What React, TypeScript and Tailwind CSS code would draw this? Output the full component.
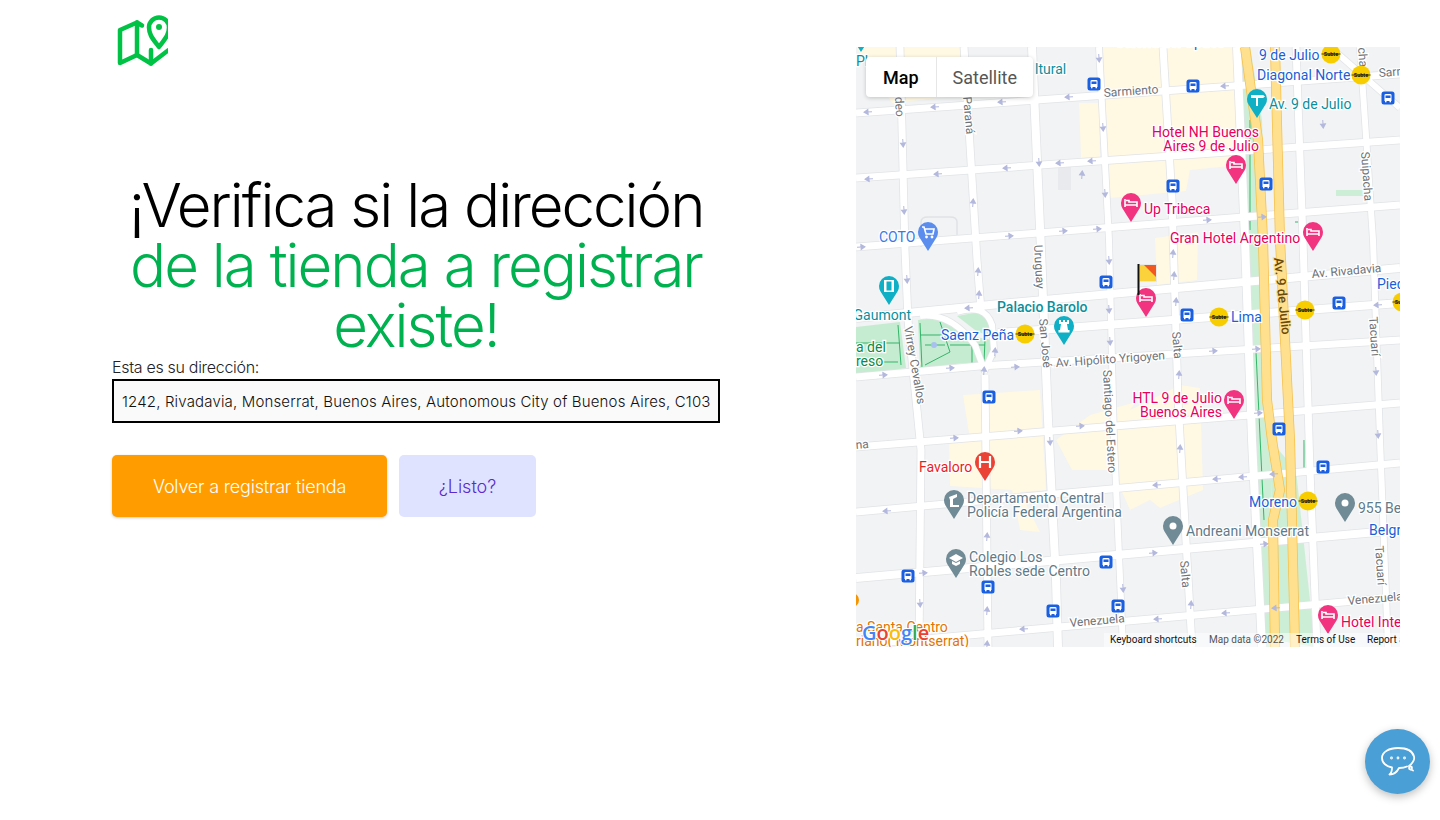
const ROADS: { d: string; w: number }[] = [
  { d: "M856 113L1400 74", w: 7 },
  { d: "M856 178L1400 140", w: 7 },
  { d: "M856 247L1400 205", w: 7 },
  { d: "M856 318L1000 304L1400 268", w: 8 },
  { d: "M998 333L1400 303", w: 8 },
  { d: "M856 377L980 366L1400 340", w: 7 },
  { d: "M856 447L1400 403", w: 7 },
  { d: "M856 512L1400 463", w: 7 },
  { d: "M856 578L1400 530", w: 8 },
  { d: "M856 645L1400 597", w: 7 },
  { d: "M900 47L905 250L908 320L921 450L919 647", w: 7 },
  { d: "M964 47L977 260L981 310", w: 7 },
  { d: "M985 375L988 647", w: 7 },
  { d: "M1032 47L1041 250L1048 420L1056 580L1058 647", w: 8 },
  { d: "M1099 47L1109 240L1114 440L1123 647", w: 6 },
  { d: "M1163 47L1172 200L1178 400L1192 647", w: 7 },
  { d: "M1237 47L1245 240L1252 440L1262 647", w: 8 },
  { d: "M1296 47L1303 240L1310 470L1317 647", w: 7 },
  { d: "M1360 47L1373 240L1380 440L1388 647", w: 6 },
  { d: "M1330 47L1400 108", w: 6 },
  { d: "M957 312Q985 303 992 325L994 350L984 372", w: 6 },
  { d: "M920 316Q950 312 975 345L985 372", w: 6 },
];

const BEIGE = [
  "856,47 968,47 966,95 892,103",
  "1103,47 1240,47 1240,165 1190,170 1186,191 1110,198 1108,150",
  "1079,103 1099,103 1100,157 1081,158",
  "1123,162 1136,160 1136,180 1125,181",
  "1155,238 1198,232 1197,280 1157,285",
  "963,395 1040,390 1046,490 1020,492 1040,532 1020,530 1012,490 950,486 949,440 970,440",
  "1090,415 1136,402 1130,410 1180,385 1200,388 1203,490 1160,508 1150,500 1130,510 1112,470 1072,470 1056,440",
];

const ARROWS: [number, number, "l" | "r" | "u" | "d"][] = [
  [868, 112, "l"], [935, 107, "l"], [1002, 102, "l"], [1069, 97, "l"], [903, 143, "d"], [1039, 162, "d"],
  [1103, 127, "d"], [1099, 58, "d"], [869, 179, "l"], [938, 174, "l"], [1007, 168, "l"], [1060, 163, "l"],
  [1092, 161, "l"], [904, 210, "d"], [973, 203, "u"], [1082, 175, "u"], [1105, 193, "d"], [1009, 236, "r"],
  [1063, 231, "r"], [1097, 229, "r"], [861, 247, "r"], [1225, 86, "l"], [1323, 124, "d"], [1207, 220, "r"],
  [1262, 217, "r"], [907, 279, "d"], [978, 272, "u"], [979, 295, "u"], [969, 308, "l"], [1109, 260, "d"],
  [1109, 309, "d"], [1110, 341, "d"], [995, 352, "u"], [984, 371, "u"], [950, 368, "r"], [883, 375, "r"],
  [1015, 367, "r"], [1080, 426, "r"], [1018, 431, "r"], [954, 438, "r"], [1050, 441, "d"], [1173, 254, "u"],
  [1174, 276, "u"], [1176, 302, "u"], [1213, 351, "r"], [1256, 349, "r"], [1179, 375, "u"], [1258, 413, "r"],
  [1378, 305, "l"], [1376, 371, "d"], [1378, 434, "d"], [1180, 449, "u"], [887, 511, "l"], [987, 537, "u"],
  [923, 573, "r"], [920, 603, "d"], [987, 611, "u"], [1123, 588, "d"], [1024, 629, "l"], [987, 645, "u"],
  [1274, 474, "l"], [1243, 477, "l"], [1217, 479, "l"], [1157, 485, "l"], [1264, 544, "r"], [1153, 553, "r"],
  [1191, 605, "u"], [1226, 613, "l"], [1158, 619, "l"], [1276, 608, "l"],
];

const BUSES = [
  [1094, 84], [1193, 86], [1388, 98], [1173, 186], [1266, 184], [1106, 282], [989, 397], [1187, 315],
  [1339, 303], [1279, 429], [908, 576], [988, 587], [1106, 562], [1053, 611], [1118, 606], [1323, 467],
];

const SUBTES = [[1331, 54], [1361, 75], [1025, 334], [1219, 317], [1305, 310], [1402, 302], [1308, 501]];

const PLACES: { t: string; x: number; y: number; c: string; end?: boolean; bold?: boolean }[] = [
  { t: "Galería del Óptico", x: 1115, y: 47, c: "#1a5fd8" },
  { t: "9 de Julio", x: 1259, y: 60, c: "#1a5fd8" },
  { t: "Diagonal Norte", x: 1257, y: 80, c: "#1a5fd8" },
  { t: "Saenz Peña", x: 941, y: 340, c: "#1a5fd8" },
  { t: "Lima", x: 1231, y: 322, c: "#1a5fd8" },
  { t: "Moreno", x: 1249, y: 507, c: "#1a5fd8" },
  { t: "Belgrano", x: 1369, y: 535, c: "#1a5fd8" },
  { t: "Piedras", x: 1377, y: 289, c: "#1a5fd8" },
  { t: "COTO", x: 879, y: 242, c: "#3b78e7" },
  { t: "Hotel NH Buenos", x: 1259, y: 137, c: "#e8005c", end: true },
  { t: "Aires 9 de Julio", x: 1259, y: 151, c: "#e8005c", end: true },
  { t: "Up Tribeca", x: 1144, y: 214, c: "#e8005c" },
  { t: "Gran Hotel Argentino", x: 1170, y: 243, c: "#e8005c" },
  { t: "HTL 9 de Julio", x: 1222, y: 403, c: "#e8005c", end: true },
  { t: "Buenos Aires", x: 1222, y: 417, c: "#e8005c", end: true },
  { t: "Hotel Intercontinental", x: 1341, y: 627, c: "#e8005c" },
  { t: "Av. 9 de Julio", x: 1269, y: 109, c: "#0a8f9c" },
  { t: "ltural", x: 1035, y: 74, c: "#0a8f9c" },
  { t: "Pla", x: 856, y: 66, c: "#0a8f9c" },
  { t: "Gaumont", x: 911, y: 320, c: "#0a8f9c", end: true },
  { t: "Palacio Barolo", x: 997, y: 312, c: "#0a8f9c", bold: true },
  { t: "a del", x: 856, y: 352, c: "#0a8a45" },
  { t: "reso", x: 856, y: 366, c: "#0a8a45" },
  { t: "Favaloro", x: 919, y: 472, c: "#ea1d25" },
  { t: "Departamento Central", x: 967, y: 503, c: "#5f7a88" },
  { t: "Policía Federal Argentina", x: 967, y: 517, c: "#5f7a88" },
  { t: "Colegio Los", x: 969, y: 562, c: "#5f7a88" },
  { t: "Robles sede Centro", x: 969, y: 576, c: "#5f7a88" },
  { t: "Andreani Monserrat", x: 1186, y: 536, c: "#5f7a88" },
  { t: "955 Belgrano", x: 1358, y: 513, c: "#5f7a88" },
  { t: "a Santa Centro", x: 856, y: 632, c: "#e37400" },
  { t: "riano( Montserrat)", x: 856, y: 646, c: "#e37400" },
];

const STREETS: { t: string; x: number; y: number; r: number }[] = [
  { t: "Sarmiento", x: 1104, y: 97, r: -4 },
  { t: "Sarmiento", x: 1379, y: 77, r: -4 },
  { t: "Av. Rivadavia", x: 1312, y: 278, r: -5 },
  { t: "Av. Hipólito Yrigoyen", x: 1056, y: 367, r: -4 },
  { t: "Venezuela", x: 1070, y: 627, r: -5 },
  { t: "Venezuela", x: 1348, y: 605, r: -5 },
  { t: "na", x: 856, y: 449, r: -5 },
  { t: "Paraná", x: 963, y: 97, r: 85 },
  { t: "Uruguay", x: 1034, y: 245, r: 87 },
  { t: "San José", x: 1039, y: 319, r: 85 },
  { t: "Santiago del Estero", x: 1103, y: 370, r: 87 },
  { t: "Salta", x: 1172, y: 332, r: 85 },
  { t: "Salta", x: 1180, y: 561, r: 85 },
  { t: "Tacuarí", x: 1369, y: 317, r: 86 },
  { t: "Tacuarí", x: 1375, y: 546, r: 86 },
  { t: "Suipacha", x: 1361, y: 152, r: 86 },
  { t: "Suipacha", x: 1356, y: 18, r: 86 },
  { t: "Virrey Cevallos", x: 904, y: 327, r: 80 },
  { t: "deo", x: 895, y: 97, r: 87 },
];

const ARROW_ROTATION = { l: 176, r: -4, u: -86, d: 86 };

function Arrow({ x, y, dir }: { x: number; y: number; dir: "l" | "r" | "u" | "d" }) {
  return (
    <path
      d="M-4 0H1M0-2.500L4 0L0 2.500Z"
      transform={`translate(${x} ${y}) rotate(${ARROW_ROTATION[dir]})`}
      fill="#b3b8dc"
      stroke="#b3b8dc"
      strokeWidth="1"
    />
  );
}

function Bus({ x, y }: { x: number; y: number }) {
  return (
    <g transform={`translate(${x - 6.5} ${y - 6.5})`}>
      <rect width="13" height="13" rx="2.5" fill="#1a5fe0" />
      <path d="M3 3.5Q3 2.5 4.5 2.5H8.5Q10 2.5 10 3.5V9.5H3Z" fill="#fff" />
      <rect x="4" y="4" width="5" height="2.5" fill="#1a5fe0" />
      <rect x="3.5" y="9.5" width="1.5" height="1.3" fill="#fff" />
      <rect x="8" y="9.5" width="1.5" height="1.3" fill="#fff" />
    </g>
  );
}

function Subte({ x, y }: { x: number; y: number }) {
  return (
    <g>
      <circle cx={x} cy={y} r="9.5" fill="#f8cd00" />
      <line x1={x - 9.5} y1={y} x2={x + 9.5} y2={y} stroke="#222" strokeWidth="0.8" />
      <text x={x} y={y + 1.8} textAnchor="middle" fontSize="5.5" fontWeight="700" fill="#111">
        Subte
      </text>
    </g>
  );
}

function Pin({ x, tip, color, children }: { x: number; tip: number; color: string; children?: React.ReactNode }) {
  return (
    <g transform={`translate(${x} ${tip - 19})`}>
      <path d="M0 19L-8.5 5.5A10 10 0 0 1-10 0A10 10 0 0 1 10 0A10 10 0 0 1 8.5 5.5Z" fill={color} />
      {children}
    </g>
  );
}

const BedGlyph = (
  <path d="M-6-4V4M-6 2H6V4M6 2V-1H-2V-2.5H-5" fill="none" stroke="#fff" strokeWidth="1.6" />
);
const DotGlyph = <circle r="3.5" fill="#fff" />;

function GoogleMap() {
  return (
    <svg viewBox="856 47 544 600" className="block w-full h-full" style={{ fontFamily: "Roboto, sans-serif" }}>
      <rect x="856" y="47" width="544" height="600" fill="#f1f3f4" />
      {BEIGE.map((p) => (
        <polygon key={p} points={p} fill="#fff8e3" />
      ))}
      <rect x="1058" y="165" width="13" height="25" fill="#e8eaed" />
      <path d="M921 247V222Q921 217 928 217H950Q957 217 957 222V240" fill="none" stroke="#e0e2e5" strokeWidth="1.5" />

      {/* parks */}
      <polygon points="1240,47 1250,47 1262,120 1275,640 1315,647 1296,470 1270,440 1262,300 1248,240" fill="#cdeed6" />
      <polygon points="1250,100 1262,240 1270,440 1275,647 1262,647 1250,440 1245,240" fill="#cdeed6" />
      <polygon points="856,327 900,322 906,368 856,376" fill="#c5ecd0" />
      <polygon points="918,320 945,317 965,335 992,340 996,357 985,366 965,363 920,368" fill="#c5ecd0" />
      <polygon points="957,316 985,311 993,325 992,338 975,330" fill="#c5ecd0" />
      <rect x="1336" y="190" width="28" height="6" fill="#cdeed6" />
      <g fill="none" stroke="#34b56a" strokeWidth="1">
        <path d="M856 343H900M898 325L901 365M856 362H898M920 323L922 368M920 335H945M940 322L950 352L925 365M950 345H985M972 340V365M985 340L984 362M925 345H945" />
        <path d="M1250 120V230M1256 352L1264 520M1304 440V470M1295 222H1305V245" />
      </g>
      <circle cx="934" cy="345" r="3" fill="#a8c0f0" />

      {/* streets */}
      <g fill="none" strokeLinecap="butt">
        {ROADS.map((r) => (
          <path key={r.d} d={r.d} stroke="#e1e3e6" strokeWidth={r.w + 1.5} />
        ))}
        {ROADS.map((r) => (
          <path key={r.d} d={r.d} stroke="#fff" strokeWidth={r.w} />
        ))}
        <path d="M1245 47L1258 140L1263 240L1267 400L1272 440L1280 490L1273 520L1275 647" stroke="#f7c04a" strokeWidth="10" />
        <path d="M1245 47L1258 140L1263 240L1267 400L1272 440L1280 490L1273 520L1275 647" stroke="#fee08f" strokeWidth="8.500" />
        <path d="M1275 47L1280 240L1290 440L1295 647" stroke="#f7c04a" strokeWidth="10" />
        <path d="M1275 47L1280 240L1290 440L1295 647" stroke="#fee08f" strokeWidth="8.500" />
      </g>

      {ARROWS.map(([x, y, dir]) => (
        <Arrow key={`${x}-${y}`} x={x} y={y} dir={dir} />
      ))}

      {/* labels */}
      <g fontSize="12" fill="#6f7378" stroke="#fff" strokeWidth="2.5" style={{ paintOrder: "stroke" }}>
        {STREETS.map((s) => (
          <text key={`${s.t}-${s.x}`} transform={`translate(${s.x} ${s.y}) rotate(${s.r})`}>
            {s.t}
          </text>
        ))}
      </g>
      <text
        transform="translate(1274 258) rotate(84)"
        fontSize="13"
        fontWeight="500"
        fill="#6b4a08"
        stroke="#fdde8c"
        strokeWidth="2"
        style={{ paintOrder: "stroke" }}
      >
        Av. 9 de Julio
      </text>
      <g fontSize="14" stroke="#fff" strokeWidth="2.5" style={{ paintOrder: "stroke" }}>
        {PLACES.map((p) => (
          <text
            key={`${p.t}-${p.x}`}
            x={p.x}
            y={p.y}
            fill={p.c}
            textAnchor={p.end ? "end" : "start"}
            fontWeight={p.bold ? 500 : 400}
          >
            {p.t}
          </text>
        ))}
      </g>

      {BUSES.map(([x, y]) => (
        <Bus key={`${x}-${y}`} x={x} y={y} />
      ))}
      {SUBTES.map(([x, y]) => (
        <Subte key={`${x}-${y}`} x={x} y={y} />
      ))}

      {/* pins */}
      <Pin x={1236} tip={184} color="#f2337f">{BedGlyph}</Pin>
      <Pin x={1131} tip={222} color="#f2337f">{BedGlyph}</Pin>
      <Pin x={1313} tip={251} color="#f2337f">{BedGlyph}</Pin>
      <Pin x={1234} tip={419} color="#f2337f">{BedGlyph}</Pin>
      <Pin x={1328} tip={634} color="#f2337f">{BedGlyph}</Pin>
      <Pin x={928} tip={251} color="#5b8def">
        <path d="M-6-5H-4L-2 2H5L6-3H-3" fill="none" stroke="#fff" strokeWidth="1.6" />
        <circle cx="-1.5" cy="5" r="1.4" fill="#fff" />
        <circle cx="4" cy="5" r="1.4" fill="#fff" />
      </Pin>
      <Pin x={1257} tip={118} color="#0fb0c6">
        <path d="M-6-4H6L8-2.5L6-1H1V7H-1V-1H-6Z" fill="#fff" />
      </Pin>
      <Pin x={889} tip={305} color="#0fb0c6">
        <rect x="-5" y="-6" width="10" height="12" fill="#fff" />
        <rect x="-2.5" y="-4.5" width="5" height="9" fill="#0fb0c6" />
      </Pin>
      <Pin x={1064} tip={345} color="#0fb0c6">
        <path d="M-5-6H-3V-4H-1V-6H1V-4H3V-6H5V-2H3L4 4H5.5V6.5H-5.5V4H-4L-3-2H-5Z" fill="#fff" />
      </Pin>
      <Pin x={985} tip={481} color="#ea4335">
        <path d="M-5-6V6M5-6V6M-5 0H5" fill="none" stroke="#fff" strokeWidth="2.2" />
      </Pin>
      <Pin x={954} tip={519} color="#708a96">
        <path d="M-5-3L3-6V-3L-1-1V5H5V7H-4V0Z" fill="#fff" />
      </Pin>
      <Pin x={956} tip={578} color="#708a96">
        <path d="M-7-1L0-5L7-1L0 3Z" fill="#fff" />
        <path d="M-4 2V5L0 7L4 5V2L0 4Z" fill="#fff" />
      </Pin>
      <Pin x={1173} tip={545} color="#708a96">{DotGlyph}</Pin>
      <Pin x={1345} tip={522} color="#708a96">{DotGlyph}</Pin>
      <Pin x={861} tip={52} color="#0fb0c6" />
      <circle cx="852" cy="600" r="7" fill="#f59300" />

      {/* store flag and its marker */}
      <Pin x={1146} tip={317} color="#f2337f">{BedGlyph}</Pin>
      <rect x="1139" y="264" width="18" height="18" fill="#e8e8e8" />
      <polygon points="1140,265 1156,265 1156,281 1140,281" fill="#fbd23c" />
      <polygon points="1144,265 1156,265 1156,277" fill="#f0581f" />
      <rect x="1137.5" y="264" width="2" height="31" fill="#111" />

      {/* attribution */}
      <rect x="1104" y="633" width="296" height="14" fill="#fff" fillOpacity="0.5" />
      <g fontSize="10" fill="#111">
        <text x="1110" y="643">Keyboard shortcuts</text>
        <text x="1209" y="643" fill="#555">Map data ©2022</text>
        <text x="1296" y="643">Terms of Use</text>
        <text x="1367" y="643">Report a map error</text>
      </g>
      <text
        x="862"
        y="640"
        fontSize="20"
        fontWeight="600"
        stroke="#fff"
        strokeWidth="2"
        style={{ paintOrder: "stroke", fontFamily: '"Open Sans", sans-serif' }}
      >
        <tspan fill="#4285f4">G</tspan>
        <tspan fill="#ea4335">o</tspan>
        <tspan fill="#fbbc05">o</tspan>
        <tspan fill="#4285f4">g</tspan>
        <tspan fill="#34a853">l</tspan>
        <tspan fill="#ea4335">e</tspan>
      </text>
    </svg>
  );
}

function MapTypeControl() {
  return (
    <div className="absolute left-[10px] top-[10px] flex h-[40px] rounded-sm bg-white text-[18px] shadow-[0_1px_4px_rgba(0,0,0,0.2)] font-['Roboto',sans-serif]">
      <div className="flex items-center border-r border-[#e6e6e6] px-[17px] font-medium text-black">Map</div>
      <div className="flex items-center px-[16px] text-[#565656]">Satellite</div>
    </div>
  );
}

function Logo() {
  return (
    <svg viewBox="0 0 60 56" className="-ml-[4px] block h-[56px] w-[60px]" fill="none" stroke="#00c244" strokeWidth="4.500" strokeLinecap="round" strokeLinejoin="round">
      <path d="M29 9.500L12 17V50L29 42L43 50.500L60 37.500" />
      <path d="M29 9.500L34 12.500M29 9.500V42M43 37V50.500" />
      <path d="M51 34C45 26 41 22 41 14.500A10 10 0 0 1 61 14.500C61 22 57 26 51 34Z" />
      <circle cx="51" cy="14" r="1.500" strokeWidth="3" />
    </svg>
  );
}

function ChatButton() {
  return (
    <button className="fixed bottom-[26px] right-[10px] flex h-[65px] w-[65px] items-center justify-center rounded-full bg-[#4a9fd6] shadow-[0_3px_8px_rgba(0,0,0,0.25)]">
      <svg viewBox="0 0 36 32" className="h-[32px] w-[36px]" fill="none" stroke="#fff" strokeWidth="1.8" strokeLinecap="round" strokeLinejoin="round">
        <path d="M29 20C33 17 35 14.500 34 10.500C32.500 4.500 25.500 2 18 2C9 2 2 6 2 12C2 17 6.500 20.500 12 21.500C12 24 11.500 27 9.500 28.500C14 28.500 17 26 19 22C22 22 25 21.500 27 20.500" />
        <circle cx="30.500" cy="22" r="1.500" />
        <path d="M31 23.500L33 24.500" />
        <circle cx="11.500" cy="12" r="0.500" />
        <circle cx="18" cy="12" r="0.500" />
        <circle cx="24.500" cy="12" r="0.500" />
      </svg>
    </button>
  );
}

export default function App() {
  return (
    <div className="flex min-h-[820px] bg-white font-['Inter',sans-serif]">
      <div className="ml-[112px] w-[608px] shrink-0 pt-[13px]">
        <Logo />
        <h1 className="mt-[106px] text-center text-[60px] font-light leading-[60px] tracking-[-2px] text-black">
          ¡Verifica si la dirección
          <br />
          <span className="text-[#00b14f]">
            de la tienda a registrar
            <br />
            existe!
          </span>
        </h1>
        <label className="block text-[16px] font-light leading-[24px] tracking-[-0.3px] text-[#222]">Esta es su dirección:</label>
        <input
          readOnly
          value="1242, Rivadavia, Monserrat, Buenos Aires, Autonomous City of Buenos Aires, C1033AAQ"
          className="block h-[44px] w-full border-2 border-black bg-[#fafafa] px-2 text-[15px] font-light tracking-[0.16px] text-[#111] outline-none"
        />
        <div className="mt-8 flex gap-3">
          <button className="h-[62px] w-[275px] rounded-[5px] bg-[#ff9c00] text-[18px] font-light tracking-[-0.2px] text-white shadow-[0_1px_3px_rgba(0,0,0,0.2)]">
            Volver a registrar tienda
          </button>
          <button className="h-[62px] w-[137px] rounded-[5px] bg-[#dfe3ff] text-[18px] font-light text-[#5a2bd0]">
            ¿Listo?
          </button>
        </div>
      </div>
      <div className="relative ml-[136px] mt-[47px] h-[600px] w-[544px] shrink-0 overflow-hidden">
        <GoogleMap />
        <MapTypeControl />
      </div>
      <ChatButton />
    </div>
  );
}
